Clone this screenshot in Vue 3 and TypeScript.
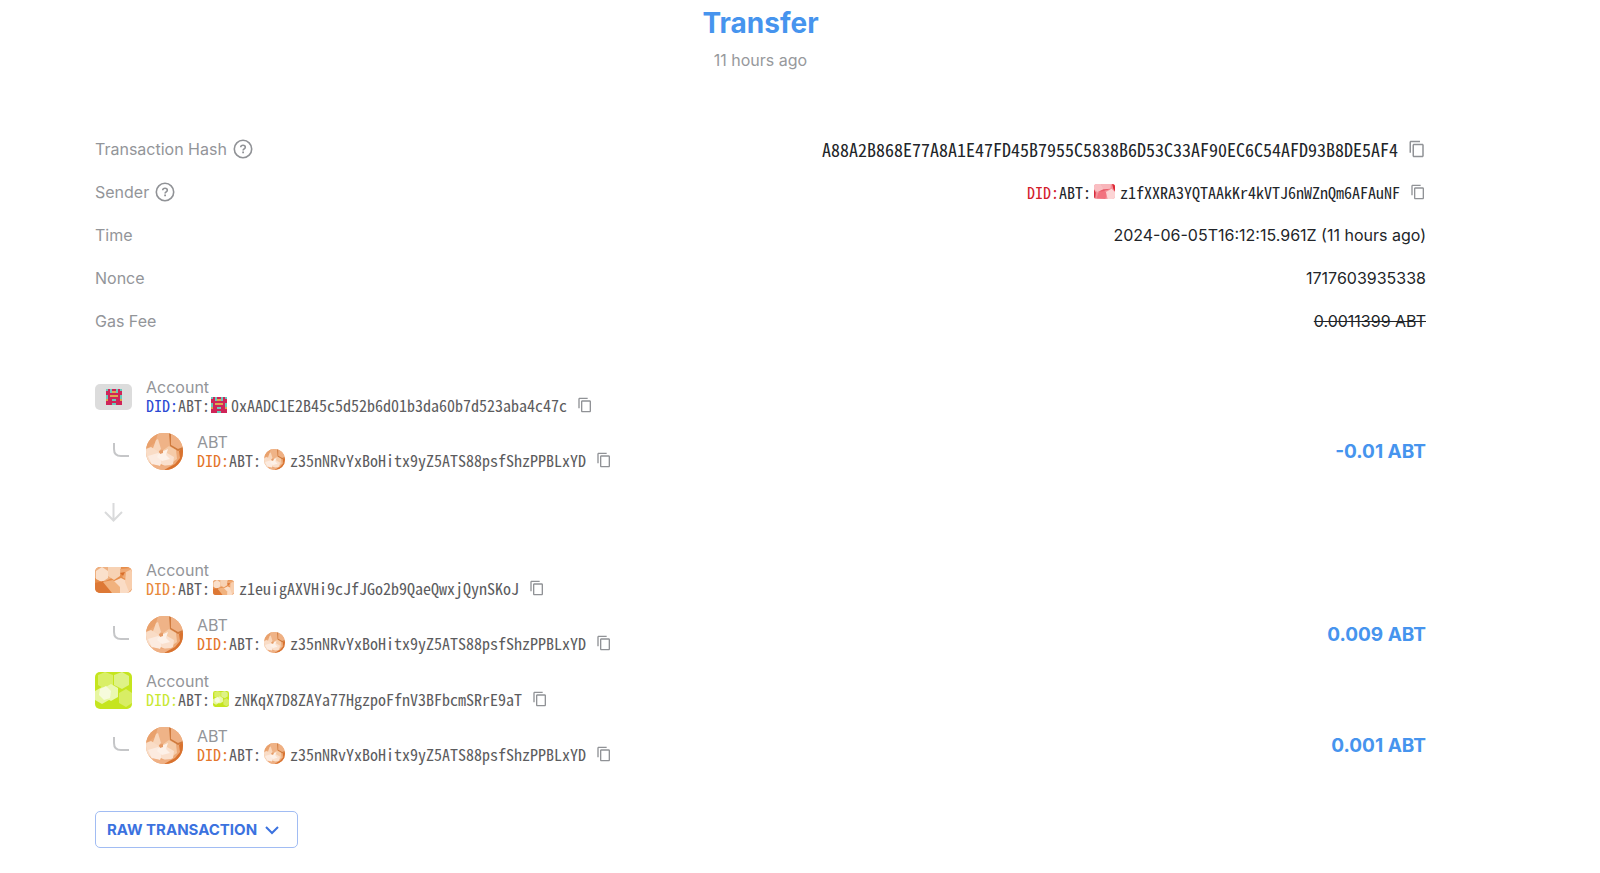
<script setup lang="ts">
import { defineComponent, h } from 'vue'

type Kind = 'castle' | 'ball' | 'amber' | 'lime' | 'rose'

interface Did {
  color: string
  kind: Kind
  id: string
}

interface Account {
  did: Did
  amount: string
  arrow?: boolean
}

const colors: Record<string, string> = { r: '#cf2458', t: '#6cc9bb', g: '#dfa650' }
const castle = ['trtrrtrt', 'rrtggtrr', 'rrrrrrrr', 'trggggrt', 'trrrrrrt', 'grrttrrg', 'rrrrrrrr', 'rrrttrrr']

type Shape = [points: string, fill: string]

const art: Record<Exclude<Kind, 'castle'>, { w: number; h: number; rx: number; base: string; shapes: Shape[] }> = {
  ball: {
    w: 37, h: 37, rx: 18, base: '#eca876',
    shapes: [
      ['0,0 14,0 10,9 0,16', '#e9a16c'],
      ['12,0 24,0 24,13 16,17 9,11', '#efb387'],
      ['25,1 37,1 37,14 32,16 25,12', '#efb083'],
      ['23,0 25,0 25,12 32,16 37,14 37,16 32,18 24,13', '#cf7a3d'],
      ['33,18 37,15 37,31 25,37 18,37 29,31 34,25', '#d8722f'],
      ['17,17 23,13 30,17 31,26 24,31 17,27', '#f5cba8'],
      ['10,7 12,6 15,16 11,21 6,18', '#f8d6bb'],
      ['0,16 5,14 13,19 13,28 6,31 0,26', '#f9dcc6'],
      ['2,23 12,20 17,26 14,33 6,32', '#fcebe0'],
      ['15,24 21,20 28,24 27,31 21,34 15,31', '#fae0cd'],
      ['13,20 22,16 20,22 24,26 16,28 11,24', '#fdf1e8'],
      ['13,18 17,17 17,20 14,21', '#e59a66'],
      ['6,31 14,33 25,32 18,37 8,36', '#efb084']
    ]
  },
  amber: {
    w: 37, h: 26, rx: 5, base: '#e78d4a',
    shapes: [
      ['0,0 22,0 17,11 8,15 0,11', '#eeb080'],
      ['1,4 7,0 13,4 13,11 7,15 1,12', '#fae0cb'],
      ['13,0 26,0 25,9 19,13 13,9', '#f7d2b4'],
      ['0,16 8,14 17,19 17,26 0,26', '#dd7835'],
      ['17,15 26,11 34,15 34,26 18,26', '#fadcc5'],
      ['25,2 36,1 37,13 28,11', '#efa873'],
      ['31,5 37,2 37,22 34,25 30,15', '#f8cead'],
      ['8,15 18,13 25,20 25,26 17,26', '#f1b27e'],
      ['25,6 30,5 28,9', '#d96e2b']
    ]
  },
  lime: {
    w: 37, h: 37, rx: 5, base: '#c5e51e',
    shapes: [
      ['3,3 10,0 18,3 18,13 10,17 3,13', '#d9ef67'],
      ['19,3 27,0 34,4 34,13 27,17 19,13', '#def286'],
      ['0,19 7,15 14,19 14,28 7,32 0,28', '#e7f6a0'],
      ['9,16 16,12 23,16 23,25 16,29 9,25', '#eaf8b0'],
      ['24,21 31,17 37,21 37,31 31,35 24,31', '#d8ed65'],
      ['5,17 11,14 16,19 15,26 9,28 4,23', '#f6fbdc']
    ]
  },
  rose: {
    w: 37, h: 26, rx: 5, base: '#f38f98',
    shapes: [
      ['0,0 12,0 18,8 8,15 0,10', '#f9bec2'],
      ['12,0 30,0 29,8 18,12', '#f8b5ba'],
      ['32,0 37,0 37,13 34,8', '#dd2935'],
      ['0,9 3,15 2,26 0,26', '#d72c3c'],
      ['8,14 16,10 23,16 20,26 5,25', '#f2727f'],
      ['21,14 31,8 37,14 37,26 24,26', '#fcd4d5'],
      ['6,14 17,9 30,8 18,12', '#e95b69']
    ]
  }
}

let clipCount = 0

const Avatar = defineComponent({
  props: { kind: { type: String, required: true } },
  setup(props) {
    const clip = `avatar-clip-${clipCount++}`
    return () => {
      if (props.kind === 'castle') {
        return h('svg', { viewBox: '0 0 8 8', 'shape-rendering': 'crispEdges', 'aria-hidden': 'true' },
          castle.flatMap((row, y) => [...row].map((c, x) => h('rect', { x, y, width: 1, height: 1, fill: colors[c] }))))
      }
      const a = art[props.kind as Exclude<Kind, 'castle'>]
      return h('svg', { viewBox: `0 0 ${a.w} ${a.h}`, 'aria-hidden': 'true' }, [
        h('clipPath', { id: clip }, [h('rect', { width: a.w, height: a.h, rx: a.rx })]),
        h('g', { 'clip-path': `url(#${clip})` }, [
          h('rect', { width: a.w, height: a.h, fill: a.base }),
          ...a.shapes.map(([points, fill]) => h('polygon', { points, fill }))
        ])
      ])
    }
  }
})

const CopyIcon = defineComponent({
  setup: () => () => h('svg', { viewBox: '0 0 24 24', fill: 'currentColor', 'aria-hidden': 'true' }, [
    h('path', { d: 'M16 1H4c-1.1 0-2 .9-2 2v14h2V3h12V1zm3 4H8c-1.1 0-2 .9-2 2v14c0 1.1.9 2 2 2h11c1.1 0 2-.9 2-2V7c0-1.1-.9-2-2-2zm0 16H8V7h11v14z' })
  ])
})

const HelpIcon = defineComponent({
  setup: () => () => h('svg', { viewBox: '0 0 20 20', fill: 'none', stroke: 'currentColor', 'stroke-width': '1.6', 'aria-hidden': 'true' }, [
    h('circle', { cx: 10, cy: 10, r: 8.7 }),
    h('path', { d: 'M7.7 8.3C7.8 6.9 8.7 6.2 10 6.2s2.3.8 2.3 2c0 1.6-2.2 1.7-2.2 3.3' }),
    h('path', { d: 'M10.1 12.5v1.7', 'stroke-width': '1.8' })
  ])
})

const DidLine = defineComponent({
  props: { did: { type: Object as () => Did, required: true } },
  setup: (props) => () => h('div', { class: 'did' }, [
    h('span', { style: { color: props.did.color } }, 'DID:'),
    h('span', 'ABT:'),
    h(Avatar, { kind: props.did.kind, class: ['mini', `mini-${props.did.kind}`] }),
    h('span', props.did.id),
    h('button', { class: 'copy', type: 'button', 'aria-label': `Copy ${props.did.id}` }, [h(CopyIcon)])
  ])
})

const hash = 'A88A2B868E77A8A1E47FD45B7955C5838B6D53C33AF90EC6C54AFD93B8DE5AF4'
const sender: Did = { color: '#d3202b', kind: 'rose', id: 'z1fXXRA3YQTAAkKr4kVTJ6nWZnQm6AFAuNF' }
const token: Did = { color: '#e4762b', kind: 'ball', id: 'z35nNRvYxBoHitx9yZ5ATS88psfShzPPBLxYD' }

const accounts: Account[] = [
  { did: { color: '#2b49d3', kind: 'castle', id: '0xAADC1E2B45c5d52b6d01b3da60b7d523aba4c47c' }, amount: '-0.01 ABT', arrow: true },
  { did: { color: '#e88a3c', kind: 'amber', id: 'z1euigAXVHi9cJfJGo2b9QaeQwxjQynSKoJ' }, amount: '0.009 ABT' },
  { did: { color: '#c9e834', kind: 'lime', id: 'zNKqX7D8ZAYa77HgzpoFfnV3BFbcmSRrE9aT' }, amount: '0.001 ABT' }
]
</script>

<template>
  <main class="page">
    <header class="head">
      <h1>Transfer</h1>
      <p>11 hours ago</p>
    </header>

    <dl class="facts">
      <div class="fact">
        <dt>Transaction Hash <button class="help" type="button" aria-label="About the transaction hash"><HelpIcon /></button></dt>
        <dd class="hash">
          <span>{{ hash }}</span>
          <button class="copy" type="button" aria-label="Copy transaction hash"><CopyIcon /></button>
        </dd>
      </div>
      <div class="fact">
        <dt>Sender <button class="help" type="button" aria-label="About the sender"><HelpIcon /></button></dt>
        <dd><DidLine :did="sender" /></dd>
      </div>
      <div class="fact"><dt>Time</dt><dd>2024-06-05T16:12:15.961Z (11 hours ago)</dd></div>
      <div class="fact"><dt>Nonce</dt><dd>1717603935338</dd></div>
      <div class="fact"><dt>Gas Fee</dt><dd><s>0.0011399 ABT</s></dd></div>
    </dl>

    <section class="flow">
      <template v-for="account in accounts" :key="account.did.id">
        <article class="account">
          <div class="line">
            <div class="avatar" :class="`avatar-${account.did.kind}`"><Avatar :kind="account.did.kind" /></div>
            <div class="text">
              <div class="name">Account</div>
              <DidLine :did="account.did" />
            </div>
          </div>
          <div class="line">
            <svg class="elbow" viewBox="0 0 37 37" aria-hidden="true"><path d="M19 10v6q0 7 7 7h8" /></svg>
            <div class="avatar"><Avatar kind="ball" /></div>
            <div class="text">
              <div class="name">ABT</div>
              <DidLine :did="token" />
            </div>
            <strong class="amount">{{ account.amount }}</strong>
          </div>
        </article>
        <svg v-if="account.arrow" class="arrow" viewBox="0 0 37 24" aria-hidden="true"><path d="M18.5 3v17M10 12l8.500 8.500L27 12" /></svg>
      </template>
    </section>

    <button class="raw" type="button">
      RAW TRANSACTION
      <svg viewBox="0 0 16 16" aria-hidden="true"><path d="M2 5l6 6 6-6" /></svg>
    </button>
  </main>
</template>

<style>
body {
  margin: 0;
  background: #fff;
}
</style>

<style scoped>
.page {
  padding: 6px 174px 24px 95px;
  font: 400 16px/20px Inter, "Liberation Sans", sans-serif;
  color: #222529;
}
.head {
  text-align: center;
}
h1 {
  margin: 0;
  font-size: 28px;
  line-height: 34px;
  font-weight: 700;
  color: #4694ee;
}
.head p {
  margin: 10px 0 0;
  color: #97999c;
}
.facts {
  margin: 57px 0 0;
}
.fact {
  display: flex;
  justify-content: space-between;
  align-items: center;
  height: 43px;
}
dt {
  display: flex;
  align-items: center;
  gap: 6px;
  color: #939599;
}
dd {
  margin: 0;
}
.page :deep(button) {
  cursor: pointer;
}
.help,
.page :deep(.copy) {
  display: flex;
  padding: 0;
  border: 0;
  background: none;
  color: #909296;
}
.help svg {
  width: 20px;
  height: 20px;
}
.page :deep(.copy) {
  margin-left: 10px;
}
.page :deep(.copy svg) {
  width: 16px;
  height: 16px;
}
.page .hash :deep(.copy svg) {
  width: 18px;
  height: 18px;
}
.hash {
  display: flex;
  align-items: center;
  font: 18px/20px "Noto Sans Mono CJK SC", "Liberation Mono", monospace;
}
.page :deep(.did) {
  display: flex;
  align-items: center;
  height: 18px;
  font: 16px/18px "Noto Sans Mono CJK SC", "Liberation Mono", monospace;
}
.page :deep(.mini) {
  width: 21px;
  height: 21px;
  margin: 0 5px 0 3px;
}
.page :deep(.mini-amber),
.page :deep(.mini-rose) {
  height: 15px;
}
.page :deep(.mini-lime) {
  width: 16px;
  height: 16px;
}
.page :deep(.mini-castle) {
  width: 16px;
  height: 16px;
  margin: 0 4px 0 1px;
}
.flow {
  display: flex;
  flex-direction: column;
  gap: 19px;
  margin-top: 36px;
  color: #5c5c5e;
}
.account {
  display: flex;
  flex-direction: column;
  gap: 18px;
}
.line {
  display: flex;
  align-items: center;
  gap: 14px;
  height: 37px;
}
.avatar {
  display: flex;
  width: 37px;
}
.avatar svg {
  width: 37px;
}
.avatar-castle {
  justify-content: center;
  padding: 5px 0;
  border-radius: 5px;
  background: #dcdcdc;
}
.avatar-castle svg {
  width: 16px;
  height: 16px;
}
.text {
  padding-bottom: 2px;
}
.name {
  line-height: 18px;
  color: #939599;
}
.elbow,
.arrow {
  width: 37px;
  fill: none;
  stroke: #c5c6c8;
  stroke-width: 2;
}
.elbow {
  height: 37px;
}
.arrow {
  height: 24px;
  margin: 11px 0 18px;
  stroke: #d9dadb;
}
.amount {
  margin-left: auto;
  font-size: 19px;
  font-weight: 700;
  color: #4694ee;
}
.raw {
  display: flex;
  align-items: center;
  gap: 7px;
  margin-top: 47px;
  padding: 0 17px 0 11px;
  height: 37px;
  border: 1px solid #a1bcf3;
  border-radius: 5px;
  background: #fff;
  font: 700 15px/20px Inter, "Liberation Sans", sans-serif;
  color: #3b72df;
}
.raw svg {
  width: 16px;
  height: 16px;
  fill: none;
  stroke: currentColor;
  stroke-width: 2;
}
</style>
